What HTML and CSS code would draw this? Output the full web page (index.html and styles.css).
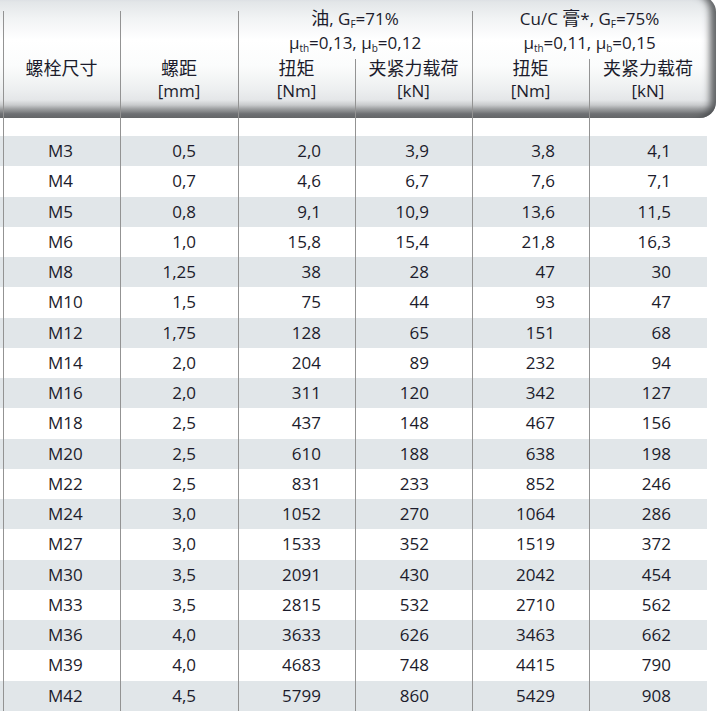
FILE: index.html
```html
<!DOCTYPE html>
<html lang="zh">
<head>
<meta charset="utf-8">
<title>螺栓扭矩表</title>
<link rel="stylesheet" href="styles.css">
</head>
<body>
<div class="sheet">
  <div class="head">
    <div class="hgrid">
      <div class="hc c1 tall"><span class="zh">螺栓尺寸</span></div>
      <div class="hc c2 tall"><span class="zh">螺距</span><br>[mm]</div>
      <div class="hc grp g1"><span class="zh">油</span>, G<sub>F</sub>=71%<br>μ<sub>th</sub>=0,13, μ<sub>b</sub>=0,12</div>
      <div class="hc grp g2">Cu/C <span class="zh">膏</span>*, G<sub>F</sub>=75%<br>μ<sub>th</sub>=0,11, μ<sub>b</sub>=0,15</div>
      <div class="hc sub s3"><span class="zh">扭矩</span><br>[Nm]</div>
      <div class="hc sub s4 late"><span class="zh">夹紧力载荷</span><br>[kN]</div>
      <div class="hc sub s5"><span class="zh">扭矩</span><br>[Nm]</div>
      <div class="hc sub s6 late"><span class="zh">夹紧力载荷</span><br>[kN]</div>
    </div>
  </div>
  <div class="body">
    <div class="row spacer"><i></i><span></span><span></span><span></span><span></span><span></span><span class="nl"></span></div>
    <div class="row odd"><i></i><span>M3</span><span>0,5</span><span>2,0</span><span>3,9</span><span>3,8</span><span class="nl">4,1</span></div>
    <div class="row"><i></i><span>M4</span><span>0,7</span><span>4,6</span><span>6,7</span><span>7,6</span><span class="nl">7,1</span></div>
    <div class="row odd"><i></i><span>M5</span><span>0,8</span><span>9,1</span><span>10,9</span><span>13,6</span><span class="nl">11,5</span></div>
    <div class="row"><i></i><span>M6</span><span>1,0</span><span>15,8</span><span>15,4</span><span>21,8</span><span class="nl">16,3</span></div>
    <div class="row odd"><i></i><span>M8</span><span>1,25</span><span>38</span><span>28</span><span>47</span><span class="nl">30</span></div>
    <div class="row"><i></i><span>M10</span><span>1,5</span><span>75</span><span>44</span><span>93</span><span class="nl">47</span></div>
    <div class="row odd"><i></i><span>M12</span><span>1,75</span><span>128</span><span>65</span><span>151</span><span class="nl">68</span></div>
    <div class="row"><i></i><span>M14</span><span>2,0</span><span>204</span><span>89</span><span>232</span><span class="nl">94</span></div>
    <div class="row odd"><i></i><span>M16</span><span>2,0</span><span>311</span><span>120</span><span>342</span><span class="nl">127</span></div>
    <div class="row"><i></i><span>M18</span><span>2,5</span><span>437</span><span>148</span><span>467</span><span class="nl">156</span></div>
    <div class="row odd"><i></i><span>M20</span><span>2,5</span><span>610</span><span>188</span><span>638</span><span class="nl">198</span></div>
    <div class="row"><i></i><span>M22</span><span>2,5</span><span>831</span><span>233</span><span>852</span><span class="nl">246</span></div>
    <div class="row odd"><i></i><span>M24</span><span>3,0</span><span>1052</span><span>270</span><span>1064</span><span class="nl">286</span></div>
    <div class="row"><i></i><span>M27</span><span>3,0</span><span>1533</span><span>352</span><span>1519</span><span class="nl">372</span></div>
    <div class="row odd"><i></i><span>M30</span><span>3,5</span><span>2091</span><span>430</span><span>2042</span><span class="nl">454</span></div>
    <div class="row"><i></i><span>M33</span><span>3,5</span><span>2815</span><span>532</span><span>2710</span><span class="nl">562</span></div>
    <div class="row odd"><i></i><span>M36</span><span>4,0</span><span>3633</span><span>626</span><span>3463</span><span class="nl">662</span></div>
    <div class="row"><i></i><span>M39</span><span>4,0</span><span>4683</span><span>748</span><span>4415</span><span class="nl">790</span></div>
    <div class="row odd"><i></i><span>M42</span><span>4,5</span><span>5799</span><span>860</span><span>5429</span><span class="nl">908</span></div>
  </div>
</div>
</body>
</html>
```

FILE: styles.css
```css
html, body {
  margin: 0;
  padding: 0;
  background: #ffffff;
}

body {
  font-family: "Open Sans", "Noto Sans CJK SC", sans-serif;
  font-size: 17px;
  color: #1c1c2c;
  overflow: hidden;
}

.sheet {
  width: 718px;
  height: 720px;
}

.zh {
  font-family: "Noto Sans CJK SC", sans-serif;
  font-size: 18px;
}

sub {
  font-size: 10px;
  line-height: 0;
  vertical-align: -3px;
}

/* ---------- header ---------- */
.head {
  width: 716px;
  margin-top: -4px;
  padding-top: 4px;
  border-radius: 0 16px 16px 0;
  background: linear-gradient(to bottom,
    #dde1e4 0px,
    #f1f3f4 22px,
    #ffffff 44px,
    #fbfcfc 70px,
    #eef0f1 92px,
    #e4e6e8 104px,
    #c9cbcd 109px,
    #9c9ea0 113px,
    #6f7173 118px,
    #6a6c6e 122px);
  box-shadow: inset -9px 0 7px -3px rgba(72, 74, 76, 0.85);
}

.hgrid {
  display: grid;
  grid-template-columns: 3px 117px 118px 117px 117px 117px 118px;
  grid-template-rows: 56px 62px;
  text-align: center;
  line-height: 22px;
}

.hc {
  --lt: 0px;
  background: linear-gradient(#939393, #939393) no-repeat left 0 top var(--lt) / 1px 100%;
  white-space: nowrap;
}

.tall {
  grid-row: 1 / 3;
  --lt: 11px;
  padding-top: 56px;
}

.c1 { grid-column: 2; }
.c2 { grid-column: 3; }

.grp {
  grid-row: 1;
  --lt: 11px;
  padding-top: 6px;
  line-height: 23.5px;
}

.g1 { grid-column: 4 / 6; }
.g2 { grid-column: 6 / 8; }

.sub {
  grid-row: 2;
  padding-top: 0;
}

.s3 { grid-column: 4; }
.s4 { grid-column: 5; }
.s5 { grid-column: 6; }
.s6 { grid-column: 7; }

.late { --lt: 3px; }

/* ---------- body ---------- */
.body {
  width: 707px;
}

.row {
  display: grid;
  grid-template-columns: 3px 117px 118px 117px 117px 117px 118px;
  height: 30.25px;
  line-height: 30.25px;
}

.row.spacer {
  height: 18px;
}

.row.odd {
  background: #e1e6e9;
}

.row > span {
  border-left: 1px solid #939393;
  text-align: right;
  white-space: nowrap;
}

.row > span.nl {
  border-left-color: #939393;
}

.row > span:nth-child(2) { text-align: left; padding-left: 44px; }
.row > span:nth-child(3) { padding-right: 42px; }
.row > span:nth-child(4) { padding-right: 34px; }
.row > span:nth-child(5) { padding-right: 43px; }
.row > span:nth-child(6) { padding-right: 34px; }
.row > span:nth-child(7) { padding-right: 36px; }
```
